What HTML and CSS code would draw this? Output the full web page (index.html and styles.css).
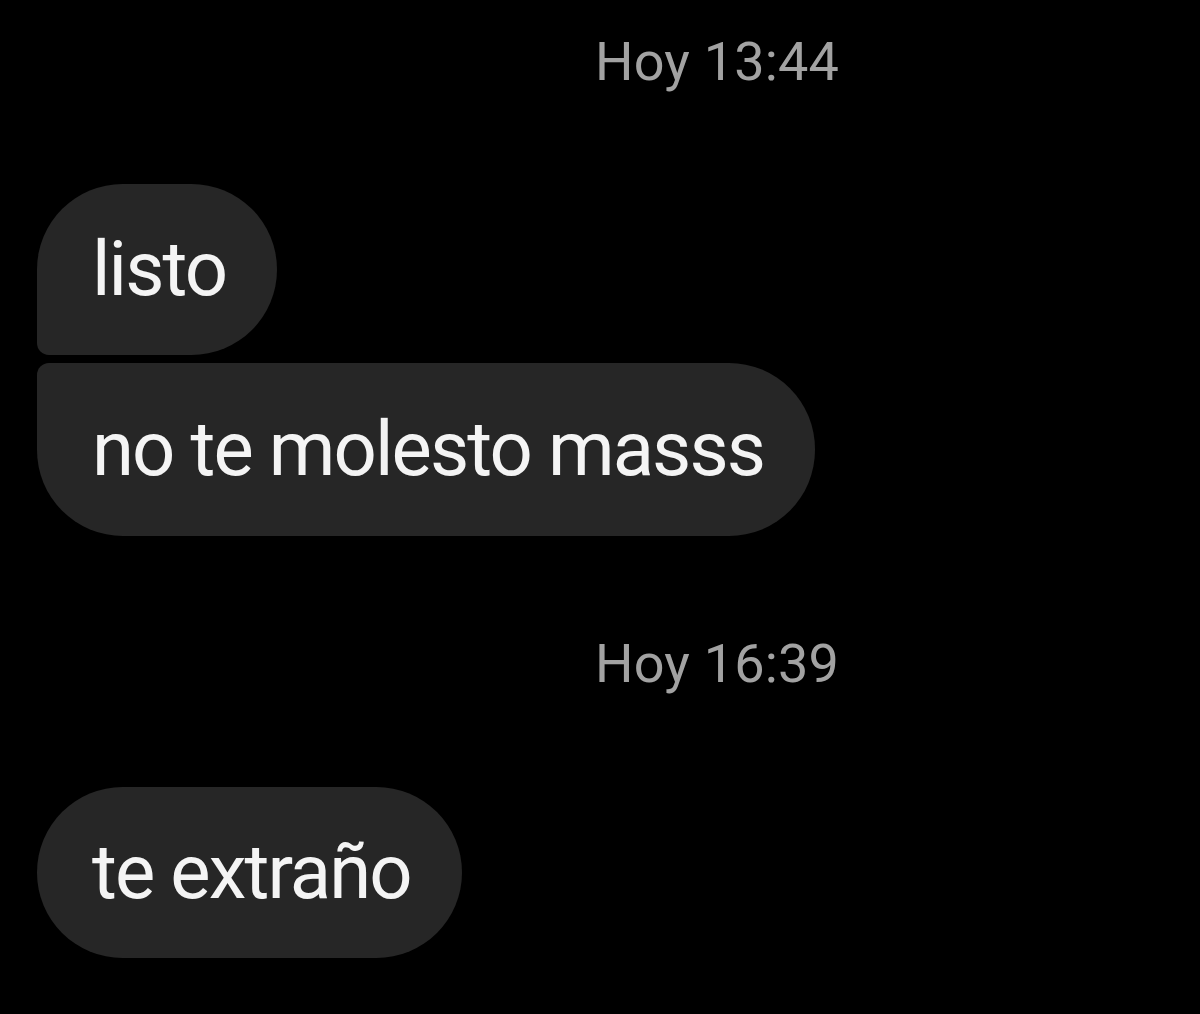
FILE: index.html
```html
<!DOCTYPE html>
<html lang="es">
<head>
<meta charset="utf-8">
<title>Chat</title>
<link rel="stylesheet" href="styles.css">
</head>
<body>
<main class="thread">
  <div class="stamp stamp-first">Hoy 13:44</div>
  <div class="group">
    <div class="bubble bubble-top">listo</div>
    <div class="bubble bubble-bottom">no te molesto masss</div>
  </div>
  <div class="stamp stamp-second">Hoy 16:39</div>
  <div class="group group-last">
    <div class="bubble bubble-single">te extraño</div>
  </div>
</main>
</body>
</html>
```
FILE: styles.css
```css
html, body {
  margin: 0;
  padding: 0;
  background: #000;
}

body {
  width: 1200px;
  height: 1014px;
  overflow: hidden;
  font-family: Roboto, "Noto Sans", "Liberation Sans", sans-serif;
}

.thread {
  display: flex;
  flex-direction: column;
  align-items: flex-start;
  padding: 35px 0 0 37px;
}

/* date separators */
.stamp {
  font-size: 54px;
  line-height: 1;
  color: #a2a2a2;
  padding-left: 558px;
  letter-spacing: 0.2px;
  filter: blur(0.6px);
}

.stamp-second {
  margin-top: 101px;
}

.group {
  display: flex;
  flex-direction: column;
  align-items: flex-start;
  gap: 8px;
  margin-top: 95px;
}

.group-last {
  margin-top: 96px;
}

/* message bubbles */
.bubble {
  background: #262626;
  color: #f4f4f4;
  font-size: 76px;
  letter-spacing: -1.9px;
  line-height: 172px;
  height: 172px;
  padding: 0 51px 0 55px;
  border-radius: 86px;
  white-space: nowrap;
  filter: blur(0.4px);
}

.bubble-top {
  border-bottom-left-radius: 12px;
  height: 171px;
  line-height: 171px;
}

.bubble-bottom {
  border-top-left-radius: 12px;
  height: 173px;
  line-height: 173px;
}

.bubble-single {
  height: 171px;
  line-height: 171px;
}
```
